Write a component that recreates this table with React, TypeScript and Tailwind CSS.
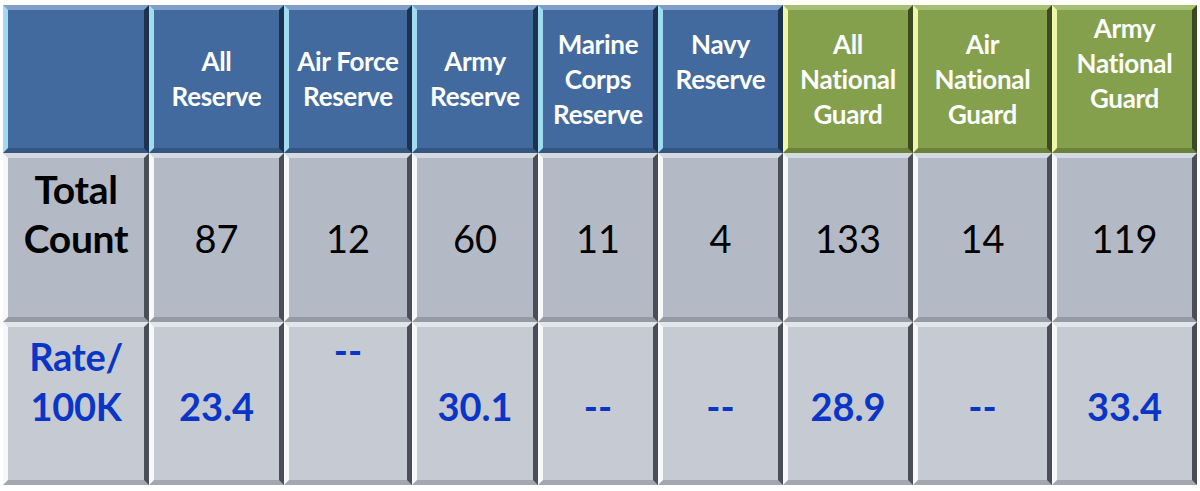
import React from "react";

type Kind = "blue" | "green" | "gray2" | "gray3";

const kindCls: Record<Kind, string> = {
  blue: "bg-[#426a9e] border-l-[#9fdcf2] border-t-[#7f9fc9] border-r-[#1d324d] border-b-[#34567f]",
  green: "bg-[#84a04c] border-l-[#eef7a8] border-t-[#a6bf72] border-r-[#3b4a22] border-b-[#6a8339]",
  gray2: "bg-[#b4bac5] border-l-[#f7f8fa] border-t-[#d5d9e2] border-r-[#4a4e56] border-b-[#959aa5]",
  gray3: "bg-[#c6cad2] border-l-[#f7f8fa] border-t-[#e2e5ea] border-r-[#4a4e56] border-b-[#a3a7b0]",
};

function Cell({ kind, children, extra = "" }: { kind: Kind; children?: React.ReactNode; extra?: string }) {
  return (
    <div
      className={`flex items-center justify-center text-center border-[5px] border-solid ${kindCls[kind]} ${extra}`}
    >
      {children}
    </div>
  );
}

const headers: { lines: string[]; kind: Kind; extra?: string }[] = [
  { lines: ["All", "Reserve"], kind: "blue" },
  { lines: ["Air Force", "Reserve"], kind: "blue" },
  { lines: ["Army", "Reserve"], kind: "blue" },
  { lines: ["Marine", "Corps", "Reserve"], kind: "blue" },
  { lines: ["Navy", "Reserve"], kind: "blue", extra: "pb-[35px]" },
  { lines: ["All", "National", "Guard"], kind: "green" },
  { lines: ["Air", "National", "Guard"], kind: "green" },
  { lines: ["Army", "National", "Guard"], kind: "green", extra: "pb-[32px]" },
];

const counts = ["87", "12", "60", "11", "4", "133", "14", "119"];
const rates = ["23.4", "--", "30.1", "--", "--", "28.9", "--", "33.4"];

export default function App() {
  return (
    <div
      className="w-[1200px] h-[491px] bg-white pt-[5px] pl-[3px]"
      style={{ fontFamily: "Lato, 'Open Sans', sans-serif" }}
    >
      <div className="grid grid-cols-[146px_135px_128px_126px_120px_125px_130px_139px_145px] grid-rows-[148px_169px_163px]">
        <Cell kind="blue" />
        {headers.map((h, i) => (
          <Cell key={i} kind={h.kind} extra={h.extra}>
            <div className="text-white font-bold text-[26px] leading-[35px] whitespace-nowrap tracking-[-0.3px]">
              {h.lines.map((l, j) => (
                <div key={j}>{l}</div>
              ))}
            </div>
          </Cell>
        ))}

        <Cell kind="gray2" extra="pb-[48px]">
          <div className="text-black font-bold text-[39px] leading-[49px] tracking-[-0.3px]">
            <div>Total</div>
            <div>Count</div>
          </div>
        </Cell>
        {counts.map((c, i) => (
          <Cell key={i} kind="gray2" extra="pt-[2px]">
            <div className="text-black text-[38px] leading-[49px]">{c}</div>
          </Cell>
        ))}

        <Cell kind="gray3" extra="pb-[46px]">
          <div className="text-[#0a36c8] font-bold text-[38px] leading-[50px] tracking-[-0.3px]">
            <div>Rate/</div>
            <div>100K</div>
          </div>
        </Cell>
        {rates.map((r, i) => (
          <Cell key={i} kind="gray3" extra={i === 1 ? "pb-[108px]" : "pt-[4px]"}>
            <div className="text-[#0a36c8] font-bold text-[38px] leading-[50px]">{r}</div>
          </Cell>
        ))}
      </div>
    </div>
  );
}
